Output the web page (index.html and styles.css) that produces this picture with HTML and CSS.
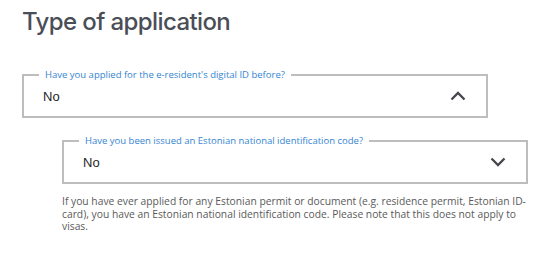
FILE: index.html
```html
<!DOCTYPE html>
<html>
<head>
  <title>Type of application</title>
  <link rel="stylesheet" href="styles.css">
</head>
<body>
  <div class="form">
    <h2>Type of application</h2>

    <fieldset class="field">
      <legend>Have you applied for the e-resident's digital ID before?</legend>
      <div class="select">
        <span class="value">No</span>
        <svg class="chevron" width="16" height="10" viewBox="0 0 16 10">
          <path d="M1.5 8.5 L8 2 L14.5 8.5" fill="none" stroke="#45474d" stroke-width="2.3"/>
        </svg>
      </div>
    </fieldset>

    <div class="nested">
      <fieldset class="field">
        <legend>Have you been issued an Estonian national identification code?</legend>
        <div class="select">
          <span class="value">No</span>
          <svg class="chevron" width="16" height="10" viewBox="0 0 16 10">
            <path d="M1.5 1.5 L8 8 L14.5 1.5" fill="none" stroke="#45474d" stroke-width="2.3"/>
          </svg>
        </div>
      </fieldset>
      <p class="help-text">If you have ever applied for any Estonian permit or document (e.g. residence permit, Estonian ID-card), you have an Estonian national identification code. Please note that this does not apply to visas.</p>
    </div>
  </div>
</body>
</html>
```

FILE: styles.css
```css
:root {
  --heading: #4a4e57;
  --label: #3485d2;
  --border: #bdbdbd;
  --text: #1f1f1f;
  --secondary: #5a5a5a;
  --icon: #45474d;
}

body {
  margin: 0;
  background: white;
  font-family: "Open Sans", "Liberation Sans", sans-serif;
}

.form {
  padding: 0 22px;
}

h2 {
  margin: 6px 0 0;
  font-family: Inter, "Open Sans", sans-serif;
  font-size: 24px;
  font-weight: 500;
  line-height: 32px;
  color: var(--heading);
  letter-spacing: -0.6px;
}

.field {
  width: 466px;
  box-sizing: border-box;
  margin: 31px 0 0;
  padding: 0;
  border: 2px solid var(--border);
}

.field legend {
  margin-left: 15px;
  padding: 0 6px;
  font-size: 9.5px;
  line-height: 12px;
  color: var(--label);
}

.select {
  display: flex;
  align-items: center;
  justify-content: space-between;
  height: 35px;
  padding: 0 20px 5px 19px;
  box-sizing: border-box;
}

.value {
  font-family: "Liberation Sans", Arial, sans-serif;
  font-size: 13px;
  color: var(--text);
}

.chevron {
  display: block;
}

.nested {
  margin-left: 40px;
}

.nested .field {
  margin-top: 17px;
}

.help-text {
  width: 466px;
  margin: 11px 0 0;
  font-size: 10.3px;
  line-height: 12.5px;
  color: var(--secondary);
}
```
